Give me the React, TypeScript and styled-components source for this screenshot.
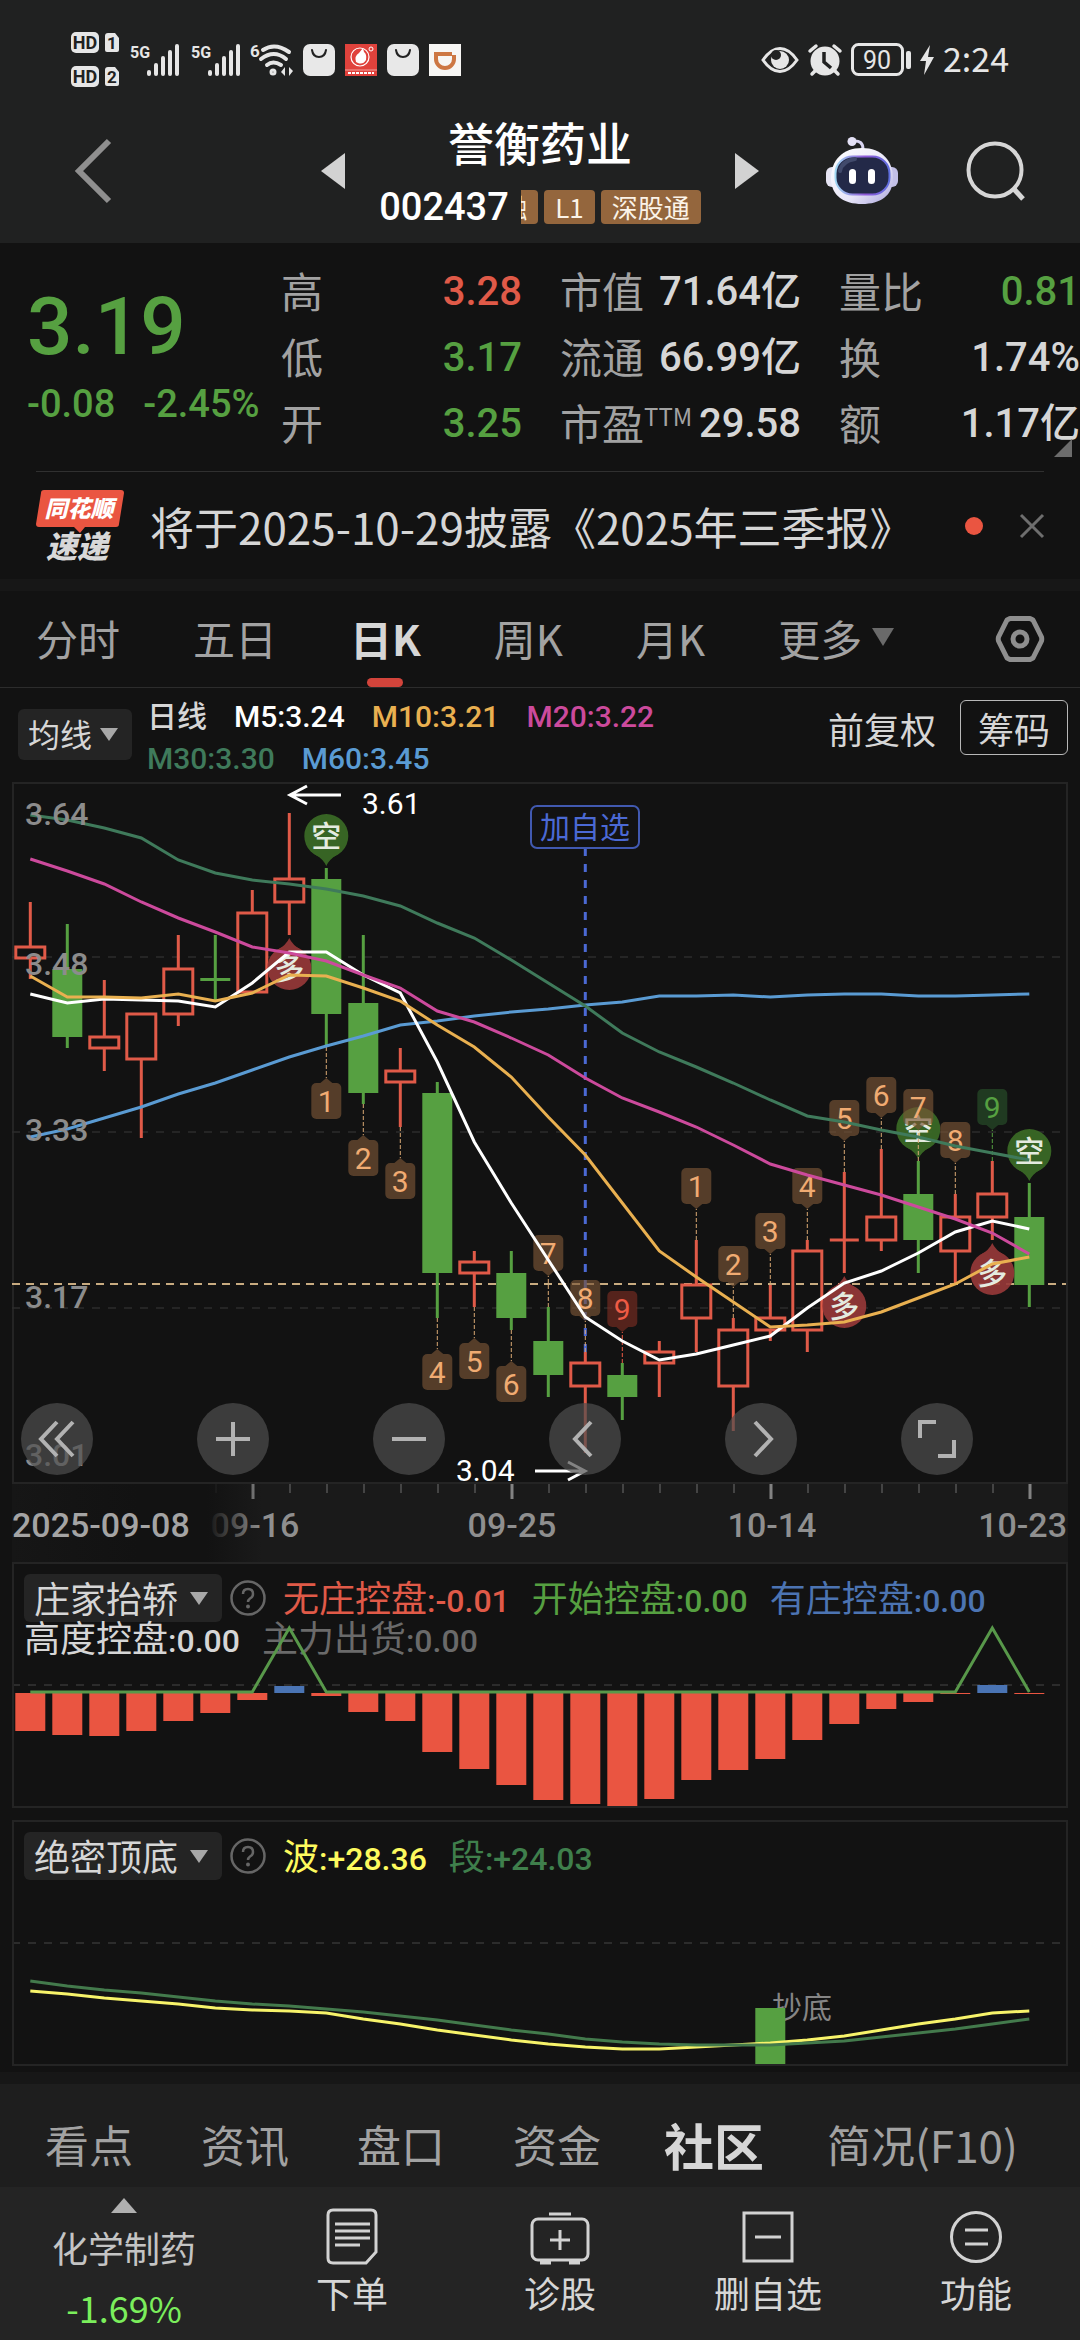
import React from 'react';
import styled, { createGlobalStyle } from 'styled-components';

const CJK = '"Noto Sans CJK SC", sans-serif';
const NUM = 'Roboto, "Noto Sans CJK SC", sans-serif';

const C = {
  page: '#121212',
  bar: '#202121',
  band: '#171717',
  frame: '#242424',
  text: '#d6d6d6',
  dim: '#a2a2a2',
  faint: '#6a6a6a',
  red: '#e05a48',
  bar_red: '#ea5541',
  green: '#56a041',
  gold: '#e9b050',
  pink: '#cc4a9c',
  pine: '#3f7a5b',
  blue: '#5a9bd3',
};

const Global = createGlobalStyle`
  html { background: ${C.page}; }
  body { margin: 0; background: ${C.page}; color: ${C.text}; font-family: ${CJK}; }
  *, *::before, *::after { box-sizing: border-box; }
  button, select { font: inherit; color: inherit; background: none; border: 0; padding: 0; margin: 0; }
  a { color: inherit; text-decoration: none; }
  svg { display: block; flex: none; overflow: visible; }
  dl, dd, dt, h1, p { margin: 0; font-weight: inherit; }
`;

/* ---------- status bar and title ---------- */

const Top = styled.header`
  background: ${C.bar};
`;
const StatusBar = styled.div`
  display: flex;
  justify-content: space-between;
  align-items: center;
  height: 98px;
  padding: 22px 71px 0;
`;
const StatusGroup = styled.div<{ $gap: number }>`
  display: flex;
  align-items: center;
  gap: ${p => p.$gap}px;
`;
const Clock = styled.span`
  padding-bottom: 4px;
  font: 34px/40px ${CJK};
  color: #e6e6e6;
`;
const TitleBar = styled.div`
  display: grid;
  grid-template-columns: 1fr 438px 1fr;
  align-items: center;
  height: 145px;
`;
const TitleLeft = styled.div`
  display: flex;
  padding-left: 74px;
`;
const TitleRight = styled.div`
  display: flex;
  justify-content: flex-end;
  align-items: center;
  gap: 68px;
  padding-right: 54px;
`;
const TitleMid = styled.div`
  display: flex;
  justify-content: space-between;
  align-items: center;
`;
const TitleBlock = styled.div`
  display: flex;
  flex-direction: column;
  align-items: center;
  gap: 16px;
  padding-bottom: 4px;
`;
const StockName = styled.h1`
  font-size: 46px;
  line-height: 60px;
  font-weight: 500;
  color: #fff;
`;
const CodeRow = styled.div`
  display: flex;
  align-items: center;
  gap: 12px;
`;
const Code = styled.span`
  font: 500 38px/40px ${NUM};
  color: #fff;
`;
const TagStrip = styled.div`
  display: flex;
  justify-content: flex-end;
  gap: 6px;
  width: 180px;
  overflow-x: clip;
`;
const Tag = styled.span`
  flex: none;
  padding: 0 11px;
  border-radius: 4px;
  background: #94663d;
  color: #fbf3e8;
  font-size: 26px;
  line-height: 34px;
`;

/* ---------- quote ---------- */

const Quote = styled.section`
  position: relative;
  display: flex;
  gap: 20px;
  height: 228px;
  padding-left: 27px;
`;
const PriceBlock = styled.div`
  width: 234px;
  padding-top: 34px;
  font-family: ${NUM};
  font-weight: 500;
  color: ${C.green};
  white-space: nowrap;
`;
const Price = styled.p`
  font-size: 80px;
  line-height: 100px;
`;
const Change = styled.p`
  display: flex;
  gap: 28px;
  font-size: 38px;
  line-height: 54px;
`;
const Stats = styled.dl`
  flex: 1;
  display: grid;
  grid-template-columns: repeat(3, 1fr);
  grid-template-rows: repeat(3, 66px);
  grid-auto-flow: column;
  column-gap: 38px;
  padding-top: 16px;
`;
const Stat = styled.div`
  display: flex;
  justify-content: space-between;
  align-items: center;
  white-space: nowrap;
`;
const StatLabel = styled.dt`
  padding-bottom: 4px;
  font-size: 42px;
  line-height: 62px;
  color: ${C.dim};
`;
const Sup = styled.sup`
  font-size: 24px;
  line-height: 24px;
  vertical-align: 14px;
`;
const StatValue = styled.dd<{ $color?: string }>`
  font: 500 40px/66px ${NUM};
  color: ${p => p.$color ?? C.text};
`;
const Corner = styled.svg`
  position: absolute;
  right: 8px;
  bottom: 14px;
`;
const Rule = styled.hr`
  height: 1px;
  margin: 0 36px;
  border: 0;
  background: #303030;
`;
const News = styled.section`
  display: flex;
  align-items: center;
  height: 107px;
  padding: 0 36px;
`;
const NewsLink = styled.a`
  flex: 1;
  margin-left: 26px;
  font-size: 44px;
  line-height: 60px;
  white-space: nowrap;
`;
const Dot = styled.span`
  width: 18px;
  height: 18px;
  margin-right: 37px;
  border-radius: 50%;
  background: ${C.bar_red};
`;
const Band = styled.div`
  height: 12px;
  background: ${C.band};
`;

/* ---------- period tabs ---------- */

const Periods = styled.nav`
  display: flex;
  align-items: center;
  gap: 73px;
  height: 97px;
  padding: 0 36px;
  border-bottom: 1px solid #2c2c2c;
`;
const Period = styled.button<{ $on?: boolean }>`
  position: relative;
  display: flex;
  align-items: center;
  gap: 10px;
  height: 96px;
  padding-bottom: 4px;
  font-size: 42px;
  font-weight: ${p => (p.$on ? 700 : 400)};
  color: ${p => (p.$on ? C.text : C.dim)};
  &::after {
    content: '';
    display: ${p => (p.$on ? 'block' : 'none')};
    position: absolute;
    left: calc(50% - 18px);
    bottom: 0;
    width: 36px;
    height: 9px;
    border-radius: 5px;
    background: #d2443b;
  }
`;
const GearButton = styled.button`
  margin-left: auto;
`;

/* ---------- average legend ---------- */

const LegendBar = styled.div`
  display: flex;
  align-items: flex-start;
  height: 94px;
  padding: 8px 12px 0 18px;
`;
const PickWrap = styled.span<{ $w: number; $h: number }>`
  display: grid;
  flex: none;
  grid-template-columns: 1fr auto;
  align-items: center;
  width: ${p => p.$w}px;
  height: ${p => p.$h}px;
  padding-right: 14px;
  border-radius: 6px;
  background: #242424;
`;
const Select = styled.select<{ $size: number }>`
  grid-area: 1 / 1 / 2 / 3;
  appearance: none;
  height: 100%;
  padding: 0 0 3px 10px;
  font-size: ${p => p.$size}px;
  line-height: 46px;
  color: ${C.text};
`;
const PickArrow = styled.svg`
  grid-area: 1 / 2;
  pointer-events: none;
`;
const PickSlot = styled.div`
  padding-top: 13px;
`;
const Averages = styled.div`
  flex: 1;
  margin-left: 15px;
  font: 500 30px/42px ${NUM};
  white-space: nowrap;
`;
const AverageRow = styled.div`
  display: flex;
  gap: 27px;
`;
const Ink = styled.span<{ $c: string }>`
  color: ${p => p.$c};
`;
const LegendActions = styled.div`
  display: flex;
  align-items: center;
  gap: 24px;
  padding-top: 4px;
  font-size: 36px;
`;
const Chips = styled.button`
  height: 55px;
  padding: 0 17px;
  border: 1px solid #b8b8b8;
  border-radius: 6px;
  line-height: 50px;
`;

/* ---------- charts ---------- */

const Charts = styled.main`
  padding: 0 12px 6px;
`;
const KChart = styled.div`
  position: relative;
`;
const Plot = styled.svg`
  width: 100%;
  height: auto;
  pointer-events: none;
`;
const Controls = styled.div`
  position: absolute;
  left: 9px;
  bottom: 9px;
  display: flex;
  gap: 104px;
`;
const Round = styled.button`
  display: grid;
  place-items: center;
  width: 72px;
  height: 72px;
  border-radius: 50%;
  background: rgba(79, 79, 79, 0.7);
`;
const Panel = styled.section`
  display: grid;
  outline: 2px solid ${C.frame};
  outline-offset: -2px;
  & + & { margin-top: 12px; }
  & > * { grid-area: 1 / 1; }
`;
const PanelHead = styled.div`
  padding: 12px;
`;
const PanelRow = styled.div<{ $h: number }>`
  display: flex;
  align-items: center;
  gap: 22px;
  height: ${p => p.$h}px;
  white-space: nowrap;
`;
const Help = styled.button`
  margin: 0 -5px 0 -14px;
`;
const Reading = styled.span<{ $c: string }>`
  font-size: 36px;
  line-height: 38px;
  color: ${p => p.$c};
`;
const Figure = styled.span`
  font: 500 32px/38px ${NUM};
`;

/* ---------- bottom ---------- */

const Topics = styled.nav`
  display: flex;
  align-items: center;
  gap: 68px;
  height: 103px;
  padding: 16px 0 0 45px;
  background: #1e1e1e;
  white-space: nowrap;
`;
const Topic = styled.a<{ $on?: boolean }>`
  margin: 0 ${p => (p.$on ? -5 : 0)}px;
  font-size: ${p => (p.$on ? 50 : 44)}px;
  line-height: 64px;
  font-weight: ${p => (p.$on ? 700 : 400)};
  color: ${p => (p.$on ? C.text : C.dim)};
`;
const Dock = styled.footer`
  display: grid;
  grid-template-columns: 248fr repeat(4, 208fr);
  height: 153px;
  background: #242424;
`;
const DockItem = styled.button`
  display: flex;
  flex-direction: column;
  align-items: center;
  gap: 5px;
  padding-top: 20px;
  font-size: 36px;
  line-height: 44px;
`;
const Sector = styled.a`
  display: flex;
  flex-direction: column;
  align-items: center;
  padding-top: 11px;
  font-size: 36px;
  line-height: 44px;
  color: #c4c4c4;
`;
const SectorName = styled.span`
  padding: 12px 0 16px;
`;
const SectorChange = styled.span`
  color: #7bee5c;
`;

/* ---------- data ---------- */

const x = (i: number) => 30.3 + 37 * i;

type Candle = [dir: 'u' | 'd', top: number, bottom: number, high: number, low: number];
const candles: Candle[] = [
  ['u', 947, 958, 902, 979], ['d', 969, 1037, 924, 1048], ['u', 1037, 1048, 980, 1071],
  ['u', 1014, 1059, 1014, 1138], ['u', 969, 1014, 935, 1026], ['d', 978, 981, 935, 1000],
  ['u', 913, 992, 890, 992], ['u', 879, 902, 813, 935], ['d', 879, 1014, 868, 1047],
  ['d', 1003, 1093, 935, 1104], ['u', 1071, 1082, 1048, 1127], ['d', 1093, 1273, 1082, 1318],
  ['u', 1262, 1273, 1251, 1307], ['d', 1273, 1318, 1251, 1330], ['d', 1341, 1375, 1307, 1397],
  ['u', 1363, 1386, 1352, 1453], ['d', 1375, 1397, 1363, 1420], ['u', 1352, 1363, 1341, 1397],
  ['u', 1285, 1318, 1240, 1352], ['u', 1330, 1386, 1318, 1431], ['u', 1318, 1330, 1285, 1341],
  ['u', 1251, 1330, 1240, 1352], ['u', 1240, 1240, 1172, 1273], ['u', 1217, 1240, 1149, 1251],
  ['d', 1194, 1240, 1161, 1273], ['u', 1217, 1251, 1194, 1284], ['u', 1194, 1217, 1161, 1240],
  ['d', 1217, 1285, 1183, 1307],
];

const averages: [string, number[]][] = [
  [C.blue, [1137, 1129, 1118, 1107, 1094, 1083, 1070, 1057, 1046, 1036, 1025, 1021, 1016, 1012, 1009, 1005, 1002, 996, 996, 995, 997, 995, 994, 994, 996, 996, 995, 994]],
  [C.pine, [815, 820, 828, 838, 860, 873, 880, 884, 889, 896, 906, 923, 938, 960, 983, 1006, 1033, 1052, 1067, 1083, 1100, 1116, 1122, 1130, 1137, 1146, 1153, 1160]],
  ['#ffffff', [994, 1003, 999, 1000, 1001, 1007, 983, 952, 952, 975, 993, 1062, 1142, 1203, 1260, 1317, 1341, 1360, 1354, 1345, 1336, 1308, 1283, 1271, 1253, 1232, 1221, 1229]],
  [C.pink, [859, 871, 884, 902, 918, 932, 947, 953, 961, 975, 988, 1011, 1022, 1038, 1055, 1078, 1098, 1112, 1127, 1145, 1164, 1175, 1185, 1195, 1207, 1219, 1233, 1254]],
  [C.gold, [976, 997, 997, 998, 994, 1001, 993, 975, 976, 988, 1001, 1025, 1047, 1077, 1117, 1155, 1203, 1251, 1277, 1302, 1327, 1325, 1322, 1312, 1298, 1284, 1264, 1257]],
];

const flags: [index: number, text: string, side: 'above' | 'below', tone?: 'red' | 'green'][] = [
  [8, '1', 'below'], [9, '2', 'below'], [10, '3', 'below'], [11, '4', 'below'], [12, '5', 'below'], [13, '6', 'below'],
  [14, '7', 'above'], [15, '8', 'above'], [16, '9', 'above', 'red'], [18, '1', 'above'], [19, '2', 'above'],
  [20, '3', 'above'], [21, '4', 'above'], [22, '5', 'above'], [23, '6', 'above'], [24, '7', 'above'],
  [25, '8', 'above'], [26, '9', 'above', 'green'],
];

const pins: [index: number, side: 'short' | 'long'][] = [
  [7, 'long'], [8, 'short'], [22, 'long'], [24, 'short'], [26, 'long'], [27, 'short'],
];

const control = [1731, 1735, 1736, 1731, 1721, 1713, 1700, 1686, 1696, 1712, 1721, 1752, 1769, 1785, 1800, 1804, 1808, 1799, 1780, 1770, 1759, 1740, 1724, 1709, 1702, 1694, 1685, 1694];
const wave = [1991, 1994, 1998, 2001, 2004, 2008, 2010, 2011, 2013, 2019, 2024, 2030, 2035, 2040, 2044, 2047, 2049, 2049, 2047, 2045, 2043, 2040, 2036, 2030, 2024, 2019, 2013, 2011];
const segment = [1981, 1986, 1990, 1993, 1997, 2001, 2004, 2006, 2009, 2012, 2016, 2020, 2025, 2030, 2034, 2039, 2042, 2044, 2045, 2045, 2045, 2043, 2041, 2037, 2033, 2029, 2024, 2019];

const line = (ys: number[]) => ys.map((y, i) => `${x(i)},${y}`).join(' ');

/* ---------- drawings ---------- */

const Down = ({ w = 18, h = 13, c = '#a8a8a8' }: { w?: number; h?: number; c?: string }) => (
  <svg width={w} height={h} viewBox="0 0 18 13" preserveAspectRatio="none"><path d="M0 0H18L9 13Z" fill={c} /></svg>
);

const SimBadge = () => (
  <svg width="49" height="56" viewBox="0 0 49 56">
    {[0, 34].map((y, i) => (
      <g key={y} transform={`translate(0 ${y})`}>
        <rect width="28" height="21" rx="5" fill="#e6e6e6" />
        <text x="14" y="17" textAnchor="middle" fontFamily="Roboto" fontWeight="700" fontSize="18" fill={C.bar}>HD</text>
        <path d="M37 1H44L48 6V18Q48 20 46 20H36Q34 20 34 18V4Q34 1 37 1Z" fill="#e6e6e6" />
        <text x="41" y="17" textAnchor="middle" fontFamily="Roboto" fontWeight="700" fontSize="17" fill={C.bar}>{i + 1}</text>
      </g>
    ))}
  </svg>
);

const Signal = () => (
  <svg width="51" height="34" viewBox="0 0 51 34" fill="#e6e6e6">
    <text x="0" y="15" fontFamily="Roboto" fontWeight="700" fontSize="16" fill="#e6e6e6">5G</text>
    <rect x="17" y="27" width="4" height="6" rx="2" /><rect x="24" y="20" width="4" height="13" rx="2" />
    <rect x="31" y="13" width="4" height="20" rx="2" /><rect x="38" y="7" width="4" height="26" rx="2" />
    <rect x="45" y="1" width="4" height="32" rx="2" />
  </svg>
);

const Wifi = () => (
  <svg width="41" height="34" viewBox="0 0 41 34" fill="none" stroke="#e6e6e6" strokeWidth="4" strokeLinecap="round">
    <text x="-2" y="14" fontFamily="Roboto" fontWeight="700" fontSize="17" fill="#e6e6e6" stroke="none">6</text>
    <path d="M11 7Q23 -1 37 9M9 16Q22 6 34 16M15 22Q21 17 29 22" />
    <circle cx="21" cy="29" r="1.5" />
    <path d="M33 24V33L29 29ZM37 24V33L41 28Z" fill="#e6e6e6" stroke="none" />
  </svg>
);

const Bag = () => (
  <svg width="32" height="32" viewBox="0 0 32 32">
    <rect width="32" height="32" rx="7" fill="#e8e8e8" />
    <path d="M9 6Q10 13 16 13T23 6" fill="none" stroke="#222" strokeWidth="2" strokeLinecap="round" />
  </svg>
);

const RedApp = () => (
  <svg width="32" height="32" viewBox="0 0 32 32">
    <rect width="32" height="32" fill="#e0423c" />
    <circle cx="15" cy="13" r="9" fill="none" stroke="#fff" strokeWidth="1.2" />
    <path d="M11 18Q9 12 14 9L18 4L19 8Q22 10 21 16Q18 21 13 19Z" fill="#fff" />
    <circle cx="26" cy="5" r="2" fill="none" stroke="#fff" />
    <path d="M0 26H32" stroke="#f4a39f" /><path d="M3 29H29" stroke="#fff" strokeWidth="2" strokeDasharray="3 1" />
  </svg>
);

const OrangeApp = () => (
  <svg width="32" height="32" viewBox="0 0 32 32">
    <rect width="32" height="32" fill="#f7f6f4" />
    <path d="M23 10H7V15A9 9 0 0 0 25 15V11" fill="none" stroke="#cd7743" strokeWidth="4" />
  </svg>
);

const Eye = () => (
  <svg width="38" height="26" viewBox="0 0 38 26">
    <path d="M2 13Q10 1.500 19 1.500T36 13Q28 24.500 19 24.500T2 13Z" fill="none" stroke="#e6e6e6" strokeWidth="3" />
    <circle cx="19" cy="13" r="9" fill="#e6e6e6" /><circle cx="15" cy="8" r="5" fill={C.bar} />
  </svg>
);

const Alarm = () => (
  <svg width="34" height="32" viewBox="0 0 34 32">
    <path d="M2 7L8 2M32 7L26 2M8 26L4 30M26 26L30 30" stroke="#e6e6e6" strokeWidth="3.500" strokeLinecap="round" />
    <circle cx="17" cy="17" r="14.500" fill="#e6e6e6" />
    <path d="M16 8V18L23 24" fill="none" stroke={C.bar} strokeWidth="3.500" />
  </svg>
);

const Battery = () => (
  <svg width="60" height="34" viewBox="0 0 60 34">
    <rect x="1.500" y="1.500" width="50" height="30" rx="6" fill="none" stroke="#e6e6e6" strokeWidth="3" />
    <rect x="55" y="8" width="5" height="18" rx="2" fill="#e6e6e6" />
    <text x="26" y="26" textAnchor="middle" fontFamily="Roboto" fontSize="25" fill="#e6e6e6">90</text>
  </svg>
);

const Bolt = () => (
  <svg width="14" height="30" viewBox="0 0 14 30"><path d="M10 0L0 16H6L4 30L14 12H8Z" fill="#e6e6e6" /></svg>
);

const Robot = () => (
  <svg width="72" height="68" viewBox="0 0 72 68">
    <defs>
      <linearGradient id="shell" x1="0" y1="0" x2="1" y2="1">
        <stop offset="0" stopColor="#ffffff" /><stop offset="0.600" stopColor="#e8e6f8" /><stop offset="1" stopColor="#a9a4dc" />
      </linearGradient>
      <linearGradient id="rim" x1="0" y1="0" x2="1" y2="0">
        <stop offset="0" stopColor="#9fd6f2" /><stop offset="0.550" stopColor="#8f57d8" /><stop offset="1" stopColor="#5f6fe0" />
      </linearGradient>
    </defs>
    <path d="M27 4Q37 3 37 12" fill="none" stroke="#d9d5f2" strokeWidth="3" />
    <circle cx="26" cy="4.500" r="4.500" fill="#e4e1f6" />
    <rect x="0" y="30" width="14" height="20" rx="6" fill="#e6e5f4" />
    <rect x="58" y="30" width="14" height="20" rx="6" fill="#c3c0e8" />
    <path d="M36 11C56 11 67 24 67 41C67 59 54 67 36 67S5 59 5 41C5 24 16 11 36 11Z" fill="url(#shell)" />
    <rect x="9.500" y="19.500" width="54" height="38" rx="17" fill="#232948" stroke="url(#rim)" strokeWidth="2" />
    <path d="M14 34Q16 24 29 22" fill="none" stroke="#414a6c" strokeWidth="4" strokeLinecap="round" />
    <rect x="23" y="32" width="7" height="15" rx="3.500" fill="#fff" /><rect x="42" y="32" width="7" height="15" rx="3.500" fill="#fff" />
  </svg>
);

const NewsLogo = () => (
  <svg width="88" height="74" viewBox="0 0 88 74">
    <path d="M8 1H85Q88 1 88 4L83 35Q83 38 80 38H49L44 44L38 38H3Q0 38 0 35L5 4Q5 1 8 1Z" fill={C.bar_red} />
    <text x="43" y="28" textAnchor="middle" fontFamily="Noto Sans CJK SC" fontWeight="900" fontStyle="italic" fontSize="23" fill="#fff">同花顺</text>
    <text x="41" y="69" textAnchor="middle" fontFamily="Noto Sans CJK SC" fontWeight="900" fontStyle="italic" fontSize="31" fill="#d8d8d8">速递</text>
  </svg>
);

const HelpIcon = () => (
  <svg width="36" height="36" viewBox="0 0 36 36">
    <circle cx="18" cy="18" r="16.500" fill="none" stroke="#666" strokeWidth="2.500" />
    <path d="M13 14Q13 9 18 9T23 14Q23 17 20 18.500Q18 20 18 22" fill="none" stroke="#666" strokeWidth="2.500" />
    <circle cx="18" cy="26.500" r="2" fill="#666" />
  </svg>
);

const Glyph = ({ d }: { d: string }) => (
  <svg width="40" height="40" viewBox="0 0 40 40"><path d={d} fill="none" stroke="#b2b2b2" strokeWidth="4" /></svg>
);

/* A numbered tag tied to its candle by a dashed line. */
const Flag = ({ i, text, side, tone }: { i: number; text: string; side: 'above' | 'below'; tone?: 'red' | 'green' }) => {
  const cx = x(i);
  const above = side === 'above';
  const anchor = above ? candles[i][3] : candles[i][4];
  const tip = above ? anchor - 31 : anchor + 31;
  const s = above ? -1 : 1;
  const boxTop = above ? tip - 41 : tip + 5;
  const fill = tone === 'red' ? '#7a2c22' : tone === 'green' ? '#28502a' : '#7a5536';
  const ink = tone === 'red' ? '#ee5b45' : tone === 'green' ? '#56a041' : '#f0ab72';
  return (
    <g>
      <path d={`M${cx} ${anchor}V${tip}`} stroke={tone ? ink : '#d9a874'} strokeDasharray="4 2" />
      <g fill={fill} fillOpacity="0.650">
        <rect x={cx - 15} y={boxTop} width="30" height="36" rx="5" />
        <path d={`M${cx - 6} ${tip + 5 * s}L${cx} ${tip}L${cx + 6} ${tip + 5 * s}Z`} />
      </g>
      <text x={cx} y={boxTop + 29} textAnchor="middle" fontFamily="Roboto" fontSize="30" fill={ink}>{text}</text>
    </g>
  );
};

const Pin = ({ i, side }: { i: number; side: 'short' | 'long' }) => {
  const cx = x(i);
  const short = side === 'short';
  const cy = short ? candles[i][3] - 32 : candles[i][4] + 33;
  const s = short ? 1 : -1;
  return (
    <g>
      <g fill={short ? '#3b6b26' : '#963838'} opacity="0.920">
        <circle cx={cx} cy={cy} r="22" />
        <path d={`M${cx - 12} ${cy + 18 * s}Q${cx - 3} ${cy + 23 * s} ${cx} ${cy + 30 * s}Q${cx + 3} ${cy + 23 * s} ${cx + 12} ${cy + 18 * s}Z`} />
      </g>
      <text x={cx} y={cy + 11} textAnchor="middle" fontFamily="Noto Sans CJK SC" fontWeight="500" fontSize="30" fill="#e4ebe0">{short ? '空' : '多'}</text>
    </g>
  );
};

const CandlePlot = () => (
  <Plot viewBox="12 782 1056 702" role="img" aria-label="日K">
    <rect x="13" y="783" width="1054" height="700" fill="none" stroke={C.frame} strokeWidth="2" />
    {[957, 1132, 1308].map(y => <path key={y} d={`M12 ${y}H1066`} stroke="#2c2c2c" strokeWidth="1.500" strokeDasharray="8 8" />)}
    <path d="M12 1284H1066" stroke="#c8ab80" strokeWidth="2" strokeDasharray="8 6" />
    {candles.map(([dir, t, b, h, l], i) =>
      dir === 'd' ? (
        <g key={i} fill={C.green}>
          <rect x={x(i) - 1.5} y={h} width="3" height={l - h} /><rect x={x(i) - 15} y={t} width="30" height={b - t} />
        </g>
      ) : (
        <path key={i} d={`M${x(i)} ${h}V${t}M${x(i)} ${b}V${l}M${x(i) - 14.5} ${t}h29v${b - t}h-29z`} fill="none" stroke={C.red} strokeWidth="3" />
      ),
    )}
    <path d="M585.300 848V1352" stroke="#4b69d4" strokeWidth="3" strokeDasharray="8 8" />
    <rect x="531" y="806" width="108" height="42" rx="6" fill="none" stroke="#4159b0" strokeWidth="2" />
    <text x="585" y="838" textAnchor="middle" fontFamily="Noto Sans CJK SC" fontSize="30" fill="#4b69d4">加自选</text>
    {pins.map(([i, side]) => <Pin key={i} i={i} side={side} />)}
    {flags.map(([i, text, side, tone]) => <Flag key={i} i={i} text={text} side={side} tone={tone} />)}
    {averages.map(([c, ys]) => <polyline key={c} points={line(ys)} fill="none" stroke={c} strokeWidth="3" />)}
    {([['3.64', 825], ['3.48', 975], ['3.33', 1141], ['3.17', 1308], ['3.01', 1466]] as [string, number][]).map(([t, y]) => (
      <text key={t} x="25" y={y} fontFamily="Roboto" fontWeight="500" fontSize="32" fill="#8c8c8c">{t}</text>
    ))}
    <g fill="none" stroke="#fff" strokeWidth="3">
      <path d="M341 795H290M307 786L290 795L307 804" /><path d="M535 1471H585M568 1462L585 1471L568 1480" />
    </g>
    <g fontFamily="Roboto" fontSize="30" fill="#fff">
      <text x="362" y="814">3.61</text><text x="456" y="1481">3.04</text>
    </g>
  </Plot>
);

const DateAxis = () => (
  <Plot viewBox="12 1484 1056 78">
    <defs>
      <linearGradient id="fade" x1="0" x2="1">
        <stop offset="0" stopColor="#121212" stopOpacity="0.500" /><stop offset="0.500" stopColor="#121212" />
        <stop offset="0.780" stopColor="#121212" /><stop offset="1" stopColor="#121212" stopOpacity="0" />
      </linearGradient>
    </defs>
    <rect x="12" y="1484" width="1056" height="78" fill="#1a1a1a" />
    {candles.map((_, i) => i >= 5 && (
      <path key={i} d={`M${x(i) + 0.7} 1484V${i % 7 === 6 ? 1499 : 1493}`} stroke={i % 7 === 6 ? '#828282' : '#444'} strokeWidth={i % 7 === 6 ? 3 : 2} />
    ))}
    <g fontFamily="Roboto" fontWeight="500" fontSize="34" fill="#8f8f8f">
      <text x="255" y="1537" textAnchor="middle">09-16</text>
      <rect x="12" y="1484" width="250" height="78" fill="url(#fade)" />
      <text x="12" y="1537" fill="#a4a4a4">2025-09-08</text>
      <text x="512" y="1537" textAnchor="middle">09-25</text>
      <text x="772" y="1537" textAnchor="middle">10-14</text>
      <text x="1067" y="1537" textAnchor="end">10-23</text>
    </g>
  </Plot>
);

const ControlPlot = () => (
  <Plot viewBox="12 1562 1056 246">
    <path d="M12 1685H1066" stroke="#2c2c2c" strokeWidth="2" strokeDasharray="8 8" />
    {control.map((y, i) => (
      <rect key={i} x={x(i) - 15} y={Math.min(y, 1693)} width="30" height={Math.abs(y - 1693)} fill={y < 1693 ? '#4a74b4' : C.bar_red} />
    ))}
    <polyline points={line(control.map((_, i) => (i === 7 || i === 26 ? 1628 : 1692)))} fill="none" stroke="#58984a" strokeWidth="3" />
  </Plot>
);

const WavePlot = () => (
  <Plot viewBox="12 1820 1056 246">
    <path d="M12 1943H1066" stroke="#2c2c2c" strokeWidth="2" strokeDasharray="8 8" />
    <text x="772" y="2018" fontFamily="Noto Sans CJK SC" fontSize="30" fill="#858585">抄底</text>
    <rect x={x(20) - 15} y="2008" width="30" height="57" fill={C.green} />
    <polyline points={line(wave)} fill="none" stroke="#f7f36a" strokeWidth="3" />
    <polyline points={line(segment)} fill="none" stroke="#437a4c" strokeWidth="3" />
  </Plot>
);

const Picker = ({ label, value, w, h, size }: { label: string; value: string; w: number; h: number; size: number }) => (
  <PickWrap $w={w} $h={h}>
    <Select $size={size} aria-label={label} defaultValue={value}><option>{value}</option></Select>
    <PickArrow width="18" height="13" viewBox="0 0 18 13"><path d="M0 0H18L9 13Z" fill="#a8a8a8" /></PickArrow>
  </PickWrap>
);

const Value = ({ name, value, c }: { name: string; value: string; c: string }) => (
  <Reading $c={c}>{name}<Figure>:{value}</Figure></Reading>
);

const stats: [React.ReactNode, string, string?][] = [
  ['高', '3.28', C.red], ['低', '3.17', C.green], ['开', '3.25', C.green],
  ['市值', '71.64亿'], ['流通', '66.99亿'], [<>市盈<Sup>TTM</Sup></>, '29.58'],
  ['量比', '0.81', C.green], ['换', '1.74%'], ['额', '1.17亿'],
];

export default function App() {
  return (
    <>
      <Global />
      <Top>
        <StatusBar>
          <StatusGroup $gap={10}>
            <SimBadge /><Signal /><Signal /><Wifi /><Bag /><RedApp /><Bag /><OrangeApp />
          </StatusGroup>
          <StatusGroup $gap={9}>
            <Eye /><Alarm /><Battery /><Bolt /><Clock>2:24</Clock>
          </StatusGroup>
        </StatusBar>
        <TitleBar>
          <TitleLeft>
            <button aria-label="返回">
              <svg width="38" height="66" viewBox="0 0 38 66"><path d="M35 3L5 33L35 63" fill="none" stroke="#8f8f8f" strokeWidth="6" /></svg>
            </button>
          </TitleLeft>
          <TitleMid>
            <button aria-label="上一只"><svg width="24" height="36" viewBox="0 0 24 36"><path d="M24 0V36L0 18Z" fill="#d2d2d2" /></svg></button>
            <TitleBlock>
              <StockName>誉衡药业</StockName>
              <CodeRow>
                <Code>002437</Code>
                <TagStrip><Tag>融</Tag><Tag>L1</Tag><Tag>深股通</Tag></TagStrip>
              </CodeRow>
            </TitleBlock>
            <button aria-label="下一只"><svg width="24" height="36" viewBox="0 0 24 36"><path d="M0 0V36L24 18Z" fill="#d2d2d2" /></svg></button>
          </TitleMid>
          <TitleRight>
            <button aria-label="智能助手"><Robot /></button>
            <button aria-label="搜索">
              <svg width="60" height="60" viewBox="0 0 60 60" fill="none" stroke="#d6d6d6">
                <circle cx="29" cy="29" r="26.500" strokeWidth="4" /><path d="M47 47L57 58" strokeWidth="5" />
              </svg>
            </button>
          </TitleRight>
        </TitleBar>
      </Top>

      <Quote>
        <PriceBlock>
          <Price>3.19</Price>
          <Change><span>-0.08</span><span>-2.45%</span></Change>
        </PriceBlock>
        <Stats>
          {stats.map(([label, value, color], i) => (
            <Stat key={i}><StatLabel>{label}</StatLabel><StatValue $color={color}>{value}</StatValue></Stat>
          ))}
        </Stats>
        <Corner width="18" height="18" viewBox="0 0 18 18"><path d="M18 0V18H0Z" fill="#6c6c6c" /></Corner>
      </Quote>
      <Rule />
      <News>
        <NewsLogo />
        <NewsLink href="#news">将于2025-10-29披露《2025年三季报》</NewsLink>
        <Dot />
        <button aria-label="关闭">
          <svg width="24" height="24" viewBox="0 0 24 24"><path d="M1 1L23 23M23 1L1 23" stroke="#6e6e6e" strokeWidth="3" /></svg>
        </button>
      </News>
      <Band />

      <Periods>
        <Period>分时</Period><Period>五日</Period><Period $on>日K</Period><Period>周K</Period><Period>月K</Period>
        <Period>更多<Down w={22} h={18} c="#6a6a6a" /></Period>
        <GearButton aria-label="设置">
          <svg width="48" height="46" viewBox="0 0 48 46" fill="none" stroke="#8e8e8e" strokeWidth="5">
            <path d="M14 2.500H34L37 4L45.500 21Q46 23 45.500 25L37 42L34 43.500H14L11 42L2.500 25Q2 23 2.500 21L11 4Z" strokeLinejoin="round" />
            <circle cx="24" cy="23" r="7" />
          </svg>
        </GearButton>
      </Periods>

      <LegendBar>
        <PickSlot><Picker label="指标" value="均线" w={114} h={51} size={32} /></PickSlot>
        <Averages>
          <AverageRow>
            <Ink $c={C.text}>日线</Ink><Ink $c="#fff">M5:3.24</Ink><Ink $c={C.gold}>M10:3.21</Ink><Ink $c={C.pink}>M20:3.22</Ink>
          </AverageRow>
          <AverageRow><Ink $c={C.pine}>M30:3.30</Ink><Ink $c={C.blue}>M60:3.45</Ink></AverageRow>
        </Averages>
        <LegendActions><button>前复权</button><Chips>筹码</Chips></LegendActions>
      </LegendBar>

      <Charts>
        <KChart>
          <CandlePlot />
          <Controls>
            <Round aria-label="展开"><Glyph d="M20 3L4 20L20 37M36 3L20 20L36 37" /></Round>
            <Round aria-label="放大"><Glyph d="M3 20H37M20 3V37" /></Round>
            <Round aria-label="缩小"><Glyph d="M3 20H37" /></Round>
            <Round aria-label="左移"><Glyph d="M26 3L10 20L26 37" /></Round>
            <Round aria-label="右移"><Glyph d="M14 3L30 20L14 37" /></Round>
            <Round aria-label="全屏"><Glyph d="M3 19V3H19M21 37H37V21" /></Round>
          </Controls>
        </KChart>
        <DateAxis />
        <Panel>
          <PanelHead>
            <PanelRow $h={48}>
              <Picker label="副图一" value="庄家抬轿" w={198} h={48} size={36} />
              <Help aria-label="说明"><HelpIcon /></Help>
              <Value name="无庄控盘" value="-0.01" c={C.red} />
              <Value name="开始控盘" value="0.00" c={C.green} />
              <Value name="有庄控盘" value="0.00" c="#4c74b2" />
            </PanelRow>
            <PanelRow $h={32}>
              <Value name="高度控盘" value="0.00" c={C.text} />
              <Value name="主力出货" value="0.00" c={C.faint} />
            </PanelRow>
          </PanelHead>
          <ControlPlot />
        </Panel>
        <Panel>
          <PanelHead>
            <PanelRow $h={48}>
              <Picker label="副图二" value="绝密顶底" w={198} h={48} size={36} />
              <Help aria-label="说明"><HelpIcon /></Help>
              <Value name="波" value="+28.36" c="#fdfa5e" />
              <Value name="段" value="+24.03" c="#3f7f4c" />
            </PanelRow>
          </PanelHead>
          <WavePlot />
        </Panel>
      </Charts>
      <Band />

      <Topics>
        <Topic href="#views">看点</Topic><Topic href="#news">资讯</Topic><Topic href="#depth">盘口</Topic>
        <Topic href="#funds">资金</Topic><Topic href="#community" $on>社区</Topic><Topic href="#f10">简况(F10)</Topic>
      </Topics>
      <Dock>
        <Sector href="#sector">
          <svg width="26" height="15" viewBox="0 0 26 15"><path d="M13 0L26 15H0Z" fill="#b0b0b0" /></svg>
          <SectorName>化学制药</SectorName>
          <SectorChange>-1.69%</SectorChange>
        </Sector>
        <DockItem>
          <svg width="52" height="58" viewBox="0 0 52 58" fill="none" stroke="#d2d2d2" strokeWidth="3">
            <path d="M7 3H45Q50 3 50 8V45L40 56H7Q2 56 2 51V8Q2 3 7 3Z" /><path d="M9 17H44M9 24H44M9 31H44M9 38H34" />
          </svg>
          下单
        </DockItem>
        <DockItem>
          <svg width="60" height="58" viewBox="0 0 60 58" fill="none" stroke="#d2d2d2" strokeWidth="3">
            <rect x="2" y="12" width="56" height="41" rx="6" /><path d="M19 7H41M30 23V43M20 33H40" /><path d="M10 55H21M39 55H50" strokeWidth="5" />
          </svg>
          诊股
        </DockItem>
        <DockItem>
          <svg width="52" height="58" viewBox="0 0 52 58" fill="none" stroke="#d2d2d2" strokeWidth="3">
            <rect x="2" y="6" width="48" height="48" /><path d="M13 30H39" />
          </svg>
          删自选
        </DockItem>
        <DockItem>
          <svg width="54" height="58" viewBox="0 0 54 58" fill="none" stroke="#d2d2d2" strokeWidth="3">
            <circle cx="27" cy="30" r="24.500" /><path d="M16 23H39M16 37H39" />
          </svg>
          功能
        </DockItem>
      </Dock>
    </>
  );
}
